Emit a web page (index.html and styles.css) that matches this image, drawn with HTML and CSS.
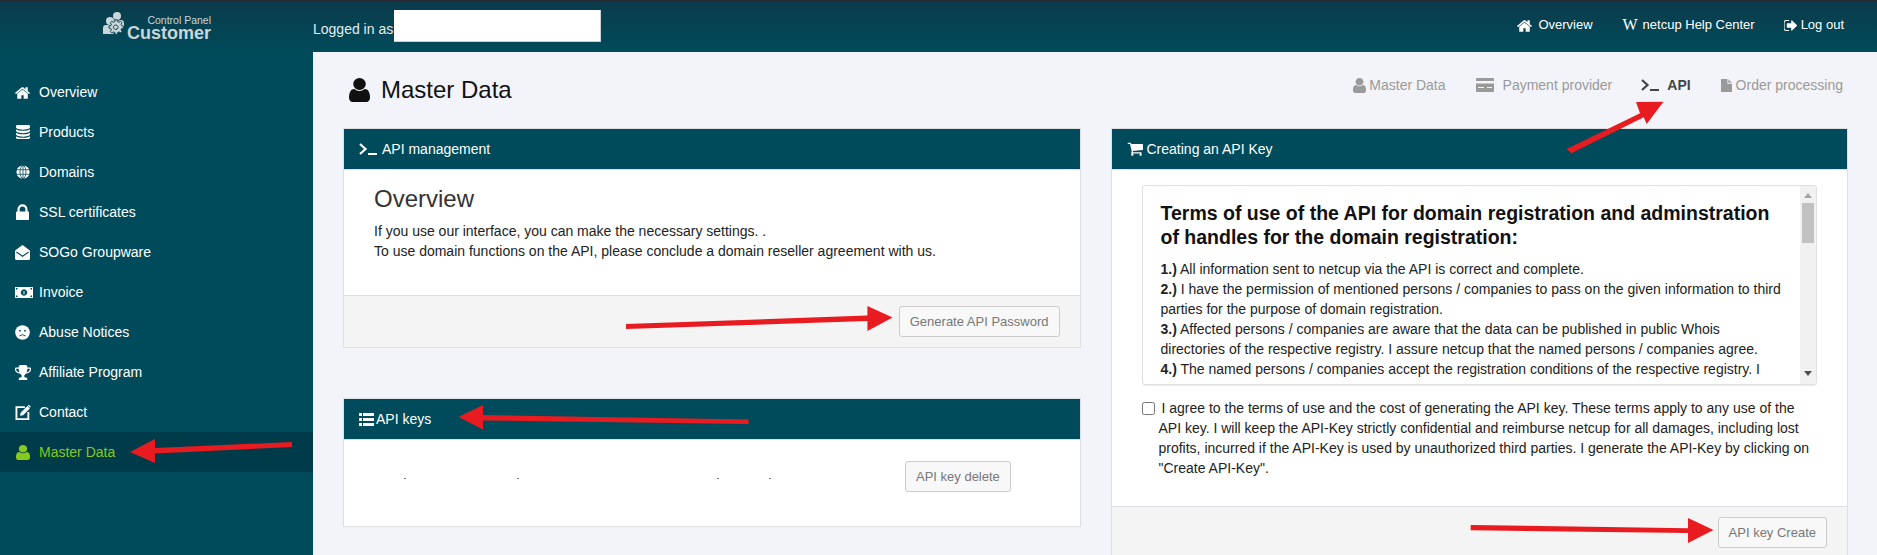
FILE: index.html
```html
<!DOCTYPE html>
<html lang="en">
<head>
<meta charset="utf-8">
<title>Customer Control Panel - Master Data</title>
<link rel="stylesheet" href="styles.css">
</head>
<body>
<svg class="defs" aria-hidden="true">
  <symbol id="i-home" viewBox="90 130 1612 1420"><path d="M1472 992v480q0 26-19 45t-45 19h-384v-384h-256v384h-384q-26 0-45-19t-19-45v-480q0-1 .5-3t.5-3l575-474 575 474q1 2 1 6zm223-69l-62 74q-8 9-21 11h-3q-13 0-21-7l-692-577-692 577q-12 8-24 7-13-2-21-11l-62-74q-8-10-7-23.500t11-21.500l719-599q32-26 76-26t76 26l244 204v-195q0-14 9-23t23-9h192q14 0 23 9t9 23v408l219 182q10 8 11 21.500t-7 23.500z"/></symbol>
  <symbol id="i-db" viewBox="128 128 1536 1536"><path d="M896 768q237 0 443-43t325-127v170q0 69-103 128t-280 93.500-385 34.500-385-34.500-280-93.500-103-128v-170q119 84 325 127t443 43zm0 768q237 0 443-43t325-127v170q0 69-103 128t-280 93.500-385 34.500-385-34.500-280-93.500-103-128v-170q119 84 325 127t443 43zm0-384q237 0 443-43t325-127v170q0 69-103 128t-280 93.500-385 34.500-385-34.500-280-93.500-103-128v-170q119 84 325 127t443 43zm0-1152q208 0 385 34.500t280 93.500 103 128v128q0 69-103 128t-280 93.500-385 34.500-385-34.500-280-93.500-103-128v-128q0-69 103-128t280-93.500 385-34.500z"/></symbol>
  <symbol id="i-globe" viewBox="0 0 16 16"><circle cx="8" cy="8" r="7.5" fill="#fff"/><g fill="none" stroke="#004b5b" stroke-width=".9"><ellipse cx="8" cy="8" rx="3.4" ry="7.5"/><path d="M8 .5v15M.6 5.400h14.800M.6 10.600h14.800"/></g></symbol>
  <symbol id="i-lock" viewBox="320 128 1152 1376"><path d="M640 768h512v-192q0-106-75-181t-181-75-181 75-75 181v192zm832 96v576q0 40-28 68t-68 28h-960q-40 0-68-28t-28-68v-576q0-40 28-68t68-28h32v-192q0-184 132-316t316-132 316 132 132 316v192h32q40 0 68 28t28 68z"/></symbol>
  <symbol id="i-open" viewBox="0 0 16 16"><path d="M8 0l7.200 5.200q.8.600.8 1.500V14q0 2-2 2H2q-2 0-2-2V6.700q0-.9.800-1.500z"/><path d="M1.500 7.500L8 12l6.500-4.500" fill="none" stroke="#004b5b" stroke-width="1.100"/></symbol>
  <symbol id="i-money" viewBox="0 0 18 12" preserveAspectRatio="none"><path d="M0 0h18v12H0z"/><path d="M1 1.200h1.500v1.500H1zM15.500 1.200H17v1.500h-1.500zM1 9.300h1.500v1.500H1zM15.500 9.300H17v1.500h-1.500z" fill="#004b5b"/><path d="M9 2.500a3.200 3.500 0 1 0 .01 0zM8.500 4.300h1v3.500h-1z" fill="#004b5b" fill-rule="evenodd"/></symbol>
  <symbol id="i-frown" viewBox="0 0 16 16"><circle cx="8" cy="8" r="7.800"/><circle cx="5.300" cy="6" r="1" fill="#004b5b"/><circle cx="10.700" cy="6" r="1" fill="#004b5b"/><path d="M4.800 11.600q3.200-2.600 6.400 0" fill="none" stroke="#004b5b"/></symbol>
  <symbol id="i-trophy" viewBox="64 128 1664 1536"><path d="M522 883q-74-162-74-371h-256v96q0 78 94.500 162t235.500 113zm1078-275v-96h-256q0 209-74 371 141-29 235.500-113t94.500-162zm128-128v128q0 71-41.500 143t-112 130-173 97.500-215.500 44.500q-42 54-95 95-38 34-52.500 72.500t-14.500 89.500q0 54 30.500 91t97.500 37q75 0 133.500 45.500t58.500 114.500v64q0 14-9 23t-23 9h-832q-14 0-23-9t-9-23v-64q0-69 58.500-114.500t133.500-45.500q67 0 97.500-37t30.500-91q0-51-14.500-89.500t-52.500-72.500q-53-41-95-95-113-5-215.500-44.500t-173-97.500-112-130-41.500-143v-128q0-40 28-68t68-28h288v-96q0-66 47-113t113-47h576q66 0 113 47t47 113v96h288q40 0 68 28t28 68z"/></symbol>
  <symbol id="i-edit" viewBox="0 0 16 16"><path d="M10 2.300H1v12.700h12.700V7.500" fill="none" stroke="currentColor" stroke-width="2"/><path d="M5.500 8.200L12.700 1l2.600 2.600-7.200 7.200-3.300.7zM13.400.3q.8-.7 1.500 0l.8.800q.7.700 0 1.500l-.3.300-2.300-2.300z"/></symbol>
  <symbol id="i-user" viewBox="256 128 1280 1536" preserveAspectRatio="none"><path d="M1536 1399q0 109-62.500 187t-150.500 78h-854q-88 0-150.500-78t-62.500-187q0-85 8.500-160.500t31.500-152 58.500-131 94-89 134.500-34.500q131 128 313 128t313-128q76 0 134.500 34.500t94 89 58.500 131 31.500 152 8.500 160.500zm-256-887q0 159-112.500 271.500t-271.500 112.500-271.500-112.500-112.500-271.500 112.500-271.500 271.500-112.500 271.500 112.500 112.500 271.500z"/></symbol>
  <symbol id="i-term" viewBox="0 0 18 12"><path d="M1 1l5.500 5L1 11" fill="none" stroke="currentColor" stroke-width="2.200"/><path d="M9 10h9v2H9z"/></symbol>
  <symbol id="i-list" viewBox="0 0 15 13"><path d="M0 0h3v3H0zM4 0h11v3H4zM0 5h3v3H0zM4 5h11v3H4zM0 10h3v3H0zM4 10h11v3H4z"/></symbol>
  <symbol id="i-cart" viewBox="0 192 1728 1472"><path d="M704 1536q0 52-38 90t-90 38-90-38-38-90 38-90 90-38 90 38 38 90zm896 0q0 52-38 90t-90 38-90-38-38-90 38-90 90-38 90 38 38 90zm128-1088v512q0 24-16.500 42.500t-40.500 21.500l-1044 122q13 60 13 70 0 16-24 64h920q26 0 45 19t19 45-19 45-45 19h-1024q-26 0-45-19t-19-45q0-11 8-31.500t16-36 21.500-40 15.500-29.500l-177-823h-204q-26 0-45-19t-19-45 19-45 45-19h256q16 0 28.500 6.500t19.500 15.500 13 24.500 8 26 5.500 29.500 4.500 26h1201q26 0 45 19t19 45z"/></symbol>
  <symbol id="i-out" viewBox="128 256 1504 1280"><path d="M704 1440q0 4 1 20t.5 26.500-3 23.500-10 19.500-20.500 6.500h-320q-119 0-203.500-84.500t-84.500-203.500v-704q0-119 84.500-203.500t203.500-84.500h320q13 0 22.500 9.500t9.500 22.500q0 4 1 20t.5 26.500-3 23.500-10 19.500-20.500 6.500h-320q-66 0-113 47t-47 113v704q0 66 47 113t113 47h312l11.500 1 11.500 3 8 5.500 7 9 2 13.500zm928-544q0 26-19 45l-544 544q-19 19-45 19t-45-19-19-45v-288h-448q-26 0-45-19t-19-45v-384q0-26 19-45t45-19h448v-288q0-26 19-45t45-19 45 19l544 544q19 19 19 45z"/></symbol>
  <symbol id="i-card" viewBox="0 0 18 14"><path fill-rule="evenodd" d="M1 0h16q1 0 1 1v12q0 1-1 1H1q-1 0-1-1V1q0-1 1-1zM0 3v2.500h18V3zM2 9v1h6V9zM11 9v1h5V9z"/></symbol>
  <symbol id="i-file" viewBox="128 0 1536 1792"><path d="M1152 512v-472q22 14 36 28l408 408q14 14 28 36h-472zm-128 32q0 40 28 68t68 28h544v1056q0 40-28 68t-68 28h-1344q-40 0-68-28t-28-68v-1600q0-40 28-68t68-28h800v544z"/></symbol>
  <symbol id="i-logo" viewBox="0 0 21 28"><circle cx="7" cy="9" r="4"/><circle cx="14" cy="4" r="4"/><path d="M0 22V16q0-3 3-3h3l3 2 3-2h-1q-1-3 0-5 3 2 6 0h1q3 0 3 3v5l-4 1-3-1-2 3-2 3z"/><path fill-rule="evenodd" d="M15.500 15l1 0 .5 2 1.500.6 1.700-1 1.400 1.400-1 1.700.6 1.500 2 .5v2l-2 .5-.6 1.500 1 1.700-1.400 1.400-1.700-1-1.500.6-.5 2h-2l-.5-2-1.500-.6-1.700 1-1.400-1.400 1-1.700-.6-1.500-2-.5v-2l2-.5.6-1.500-1-1.700 1.400-1.400 1.700 1 1.500-.6.500-2zM15 20.500a2.400 2.400 0 1 0 .01 0z" transform="translate(-1.500 -6.500) scale(.95)" stroke="#0a4453" stroke-width="1"/></symbol>
</svg>

<div class="app">
  <header class="topbar">
    <div class="brand">
      <svg class="brand-icon"><use href="#i-logo"/></svg>
      <div class="brand-text">
        <span class="brand-small">Control Panel</span>
        <span class="brand-big">Customer</span>
      </div>
    </div>
    <div class="logged">Logged in as<span class="redacted"></span></div>
    <nav class="topnav">
      <a class="topnav-home"><svg class="ic-home"><use href="#i-home"/></svg>Overview</a>
      <a class="topnav-help"><span class="wiki">W</span>netcup Help Center</a>
      <a class="topnav-out"><svg class="ic-out"><use href="#i-out"/></svg>Log out</a>
    </nav>
  </header>

  <aside class="sidebar">
    <a class="side-item"><span class="side-icon"><svg class="s-home"><use href="#i-home"/></svg></span>Overview</a>
    <a class="side-item"><span class="side-icon"><svg class="s-db"><use href="#i-db"/></svg></span>Products</a>
    <a class="side-item"><span class="side-icon"><svg class="s-globe"><use href="#i-globe"/></svg></span>Domains</a>
    <a class="side-item"><span class="side-icon"><svg class="s-lock"><use href="#i-lock"/></svg></span>SSL certificates</a>
    <a class="side-item"><span class="side-icon"><svg class="s-open"><use href="#i-open"/></svg></span>SOGo Groupware</a>
    <a class="side-item"><span class="side-icon"><svg class="s-money"><use href="#i-money"/></svg></span>Invoice</a>
    <a class="side-item"><span class="side-icon"><svg class="s-frown"><use href="#i-frown"/></svg></span>Abuse Notices</a>
    <a class="side-item"><span class="side-icon"><svg class="s-trophy"><use href="#i-trophy"/></svg></span>Affiliate Program</a>
    <a class="side-item"><span class="side-icon"><svg class="s-edit"><use href="#i-edit"/></svg></span>Contact</a>
    <a class="side-item active"><span class="side-icon"><svg class="s-user"><use href="#i-user"/></svg></span>Master Data</a>
  </aside>

  <main class="main">
    <div class="page-head">
      <h1 class="page-title"><svg class="title-icon"><use href="#i-user"/></svg>Master Data</h1>
      <nav class="tabs">
        <a class="tab tab-master"><svg class="t-user"><use href="#i-user"/></svg>Master Data</a>
        <a class="tab tab-pay"><svg class="t-card"><use href="#i-card"/></svg>Payment provider</a>
        <a class="tab tab-api"><svg class="t-term"><use href="#i-term"/></svg>API</a>
        <a class="tab tab-order"><svg class="t-file"><use href="#i-file"/></svg>Order processing</a>
      </nav>
    </div>

    <div class="columns">
      <div class="col">
        <section class="card">
          <h2 class="card-head"><svg class="h-term"><use href="#i-term"/></svg>API management</h2>
          <div class="card-body overview">
            <h3 class="overview-title">Overview</h3>
            <p class="overview-text">If you use our interface, you can make the necessary settings. .<br>To use domain functions on the API, please conclude a domain reseller agreement with us.</p>
          </div>
          <div class="card-foot"><button class="btn" type="button">Generate API Password</button></div>
        </section>

        <section class="card card-keys">
          <h2 class="card-head"><svg class="h-list"><use href="#i-list"/></svg>API keys</h2>
          <div class="card-body keys">
            <div class="key-row">
              <span class="dot"></span><span class="dot"></span><span class="dot"></span><span class="dot"></span>
              <button class="btn" type="button">API key delete</button>
            </div>
          </div>
        </section>
      </div>

      <div class="col">
        <section class="card">
          <h2 class="card-head"><svg class="h-cart"><use href="#i-cart"/></svg>Creating an API Key</h2>
          <div class="card-body create">
            <div class="terms">
              <div class="terms-text">
                <h3 class="terms-title">Terms of use of the API for domain registration and adminstration of handles for the domain registration:</h3>
                <p class="terms-body"><b>1.)</b> All information sent to netcup via the API is correct and complete.<br>
                <b>2.)</b> I have the permission of mentioned persons / companies to pass on the given information to third parties for the purpose of domain registration.<br>
                <b>3.)</b> Affected persons / companies are aware that the data can be published in public Whois directories of the respective registry. I assure netcup that the named persons / companies agree.<br>
                <b>4.)</b> The named persons / companies accept the registration conditions of the respective registry. I</p>
              </div>
              <div class="scrollbar"><span class="arrow-up"></span><span class="thumb"></span><span class="arrow-down"></span></div>
            </div>
            <label class="agree"><input class="agree-box" type="checkbox">I agree to the terms of use and the cost of generating the API key. These terms apply to any use of the API key. I will keep the API-Key strictly confidential and reimburse netcup for all damages, including lost profits, incurred if the API-Key is used by unauthorized third parties. I generate the API-Key by clicking on "Create API-Key".</label>
          </div>
          <div class="card-foot"><button class="btn" type="button">API key Create</button></div>
        </section>
      </div>
    </div>
  </main>

  <svg class="arrows" viewBox="0 0 1877 555" aria-hidden="true">
    <polygon points="292,442 155,448 155,439 130,452 155,463 155,453.500 292,447"/>
    <polygon points="748.600,419.500 483,415 483,405 458.500,417 483,429.600 483,420.500 748.600,424"/>
    <polygon points="626,324 867.400,315.500 867.400,306 892.600,317.500 867.400,331 867.400,321 626,329"/>
    <polygon points="1566.700,149 1640,113.300 1636,102 1663.500,101.700 1646.700,124 1643.700,117.300 1571.300,153.300"/>
    <polygon points="1470.700,525 1688,528.300 1688,518 1713.500,530 1688,543 1688,533 1470.700,530.300"/>
  </svg>
</div>
</body>
</html>
```

FILE: styles.css
```css
* { box-sizing: border-box; }
html, body { margin: 0; padding: 0; height: 100%; overflow: hidden; }
body { font-family: "Liberation Sans", Arial, sans-serif; font-size: 14px; line-height: 20px; color: #222; background: #f3f4f9; }
svg { display: block; fill: currentColor; flex: none; }
.defs { width: 0; height: 0; position: absolute; }

.app { position: relative; display: grid; grid-template-columns: 313px 1fr; grid-template-rows: 52px 503px; height: 555px; overflow: hidden; }

/* Top bar */
.topbar { grid-column: 1 / 3; display: flex; align-items: stretch; color: #fff; border-top: 2px solid #262a33; background: linear-gradient(#0b3b4a, #004b5b); }
.brand { width: 313px; display: flex; padding: 11px 0 0 103px; color: #c9d6da; }
.brand-icon { width: 21px; height: 28px; margin: -1px 3px 0 0; }
.brand-text { width: 84px; display: flex; flex-direction: column; align-items: flex-end; }
.brand-small { font-size: 10.5px; line-height: 14px; }
.brand-big { font-size: 18px; line-height: 12px; font-weight: 700; }
.logged { display: flex; align-items: flex-start; padding-top: 8px; line-height: 38px; color: #e6ecee; height: 50px; }
.redacted { display: block; width: 207px; height: 32px; margin: 0 0 0 1px; background: #fff; border: 1px solid #c8d2d6; border-width: 0 1px 1px 0; }
.topnav { margin-left: auto; display: flex; padding-right: 33px; font-size: 13px; height: 46px; align-items: center; }
.topnav a { display: flex; align-items: center; }
.topnav-help { margin-left: 30px; }
.topnav-out { margin-left: 29px; }
.ic-home { width: 15px; height: 13px; margin-right: 6px; }
.ic-out { width: 13px; height: 11px; margin-right: 4px; }
.wiki { font-family: "Liberation Serif", serif; font-size: 16px; width: 20px; }

/* Sidebar */
.sidebar { background: #004b5b; padding-top: 20px; color: #fff; }
.side-item { display: flex; align-items: center; height: 40px; padding-left: 15px; }
.side-icon { width: 24px; display: flex; align-items: center; }
.active { background: #003b4a; color: #86c91f; }
.s-home { width: 15px; height: 13px; }
.s-db { width: 14px; height: 14px; margin-left: 1px; }
.s-globe { width: 14px; height: 14px; margin-left: 1px; }
.s-frown { width: 15px; height: 15px; }
.s-lock { width: 13px; height: 16px; margin-left: 1px; }
.s-open { width: 15px; height: 15px; }
.s-money { width: 18px; height: 11px; }
.s-trophy { width: 16px; height: 15px; }
.s-edit { width: 16px; height: 15px; }
.s-user { width: 14px; height: 15px; margin-left: 1px; }

/* Main */
.main { padding: 0 29px 0 30px; min-width: 0; }
.page-head { display: flex; justify-content: space-between; height: 76px; }
.page-title { display: flex; align-items: center; margin: 0; padding: 0 0 0 6px; height: 76px; font-size: 24px; font-weight: 400; color: #111; }
.title-icon { width: 21px; height: 24px; margin-right: 11px; }
.tabs { display: flex; align-items: center; height: 66px; color: #9a9a9a; padding-right: 5px; }
.tab { display: flex; align-items: center; }
.tab-pay, .tab-order { margin-left: 30px; }
.tab-api { margin-left: 29px; }
.t-user { width: 13px; height: 15px; margin-right: 3px; }
.t-card { width: 18px; height: 14px; margin-right: 9px; }
.t-term { width: 18px; height: 12px; margin-right: 8px; }
.t-file { width: 11px; height: 15px; margin-right: 4px; }
.tab-api { color: #444; font-weight: 700; }

.columns { display: grid; grid-template-columns: 1fr 1fr; gap: 30px; }
.card { background: #fff; border: 1px solid #dedfe3; }
.card-keys { margin-top: 50px; }
.card-head { display: flex; align-items: center; height: 40px; margin: 0; padding-left: 15px; background: #004b5b; color: #fff; font-size: 14px; font-weight: 400; }
.h-term { width: 18px; height: 12px; margin-right: 5px; }
.h-list { width: 15px; height: 13px; margin-right: 2px; }
.h-cart { width: 16px; height: 14px; margin-right: 4px; }
.card-body { border-top: 1px solid #dedfe3; }
.card-foot { display: flex; justify-content: flex-end; padding: 10px 20px 10px; background: #f4f4f4; border-top: 1px solid #dedfe3; }
.btn { height: 31px; padding: 0 10px; font: 13px/1 "Liberation Sans", Arial, sans-serif; color: #777; background: #f8f8f8; border: 1px solid #ccc; border-radius: 3px; }

.overview { height: 126px; padding: 15px 30px 0; }
.overview-title { margin: 0 0 8px; font-size: 24px; line-height: 28px; font-weight: 400; color: #333; }
.overview-text { margin: 0; }

.keys { height: 87px; padding-top: 21px; }
.key-row { display: flex; align-items: center; padding-left: 60px; }
.dot { width: 2px; height: 1px; margin-top: 3px; background: #707a8c; }
.dot:nth-child(2) { margin-left: 111px; }
.dot:nth-child(3) { margin-left: 198px; }
.dot:nth-child(4) { margin-left: 50px; }
.key-row .btn { margin-left: 134px; }

.create { padding: 15px 30px 28px 30px; }
.terms { display: flex; height: 200px; border: 1px solid #e0e0e0; border-radius: 3px; overflow: hidden; box-shadow: 0 1px 1px rgba(0,0,0,.08); }
.terms-text { flex: 1; min-width: 0; overflow: hidden; padding: 15px 14px 0 18px; }
.terms-title { margin: 0 0 10px; font-size: 19.5px; line-height: 24px; font-weight: 700; color: #111; }
.terms-body { margin: 0; }
.scrollbar { width: 16px; background: #f1f1f1; display: flex; flex-direction: column; align-items: center; padding-top: 7px; }
.arrow-up { border: 4px solid transparent; border-top: 0; border-bottom: 5px solid #a3a3a3; }
.thumb { width: 12px; height: 40px; margin-top: 5px; background: #c1c1c1; }
.arrow-down { margin-top: auto; margin-bottom: 8px; border: 4px solid transparent; border-bottom: 0; border-top: 5px solid #505050; }
.agree { display: block; margin-top: 13px; padding-left: 17px; }
.agree-box { width: 13px; height: 13px; margin: 0 7px 0 -17px; vertical-align: -2px; }

/* Annotation arrows laid over the screenshot */
.arrows { position: absolute; left: 0; top: 0; width: 1877px; height: 555px; fill: #e81c20; pointer-events: none; }
```
